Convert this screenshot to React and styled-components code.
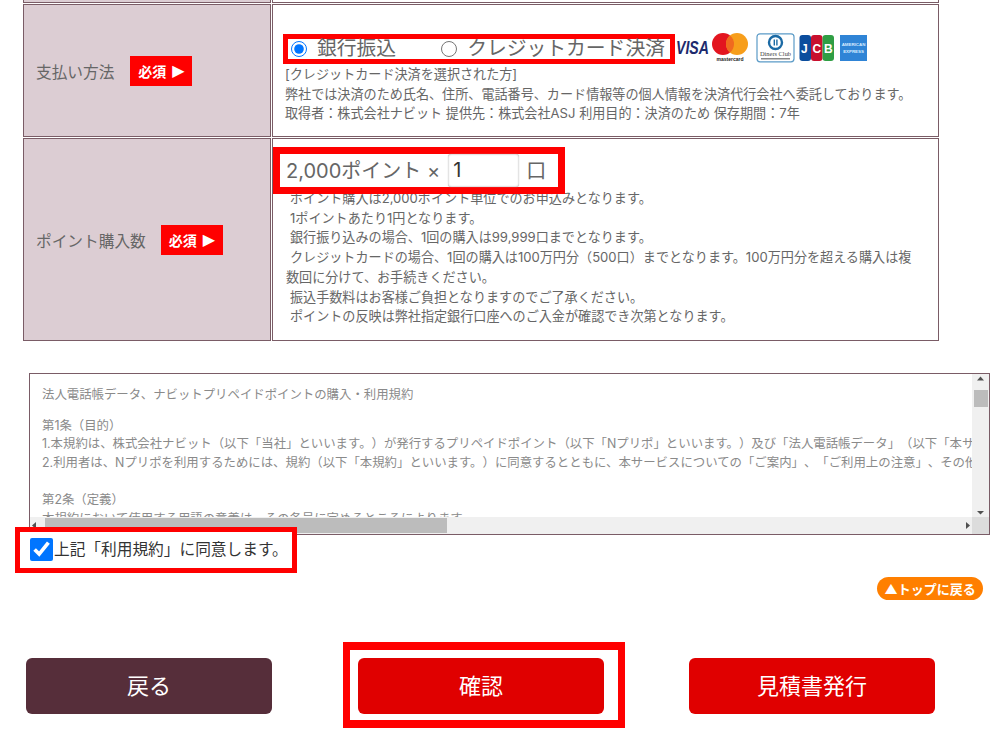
import React from "react";
import styled, { createGlobalStyle, css } from "styled-components";

const Global = createGlobalStyle`
  html, body { margin: 0; padding: 0; background: #fff; overflow: hidden; }
  body {
    font-family: Inter, "Noto Sans CJK JP", "Noto Sans", sans-serif;
    color: #666;
    text-spacing-trim: space-all;
    font-feature-settings: "calt" 0;
  }
  * { box-sizing: border-box; }
`;

const Page = styled.div`
  width: 1000px;
  height: 733px;
  overflow: hidden;
`;

const FormTable = styled.div`
  display: grid;
  grid-template-columns: 248px 667px;
  grid-template-rows: 3px 133px 203px;
  gap: 1px;
  margin-left: 23px;
`;

const SliverLabel = styled.div`
  background: #dccdd3;
  border-bottom: 1px solid #7a5c66;
  border-left: 1px solid #7a5c66;
  border-right: 1px solid #7a5c66;
`;

const SliverValue = styled.div`
  border-bottom: 1px solid #7a5c66;
  border-left: 1px solid #7a5c66;
  border-right: 1px solid #7a5c66;
`;

const LabelCell = styled.div`
  display: flex;
  align-items: center;
  gap: ${(p) => p.$gap}px;
  padding-left: 12px;
  background: #dccdd3;
  border: 1px solid #7a5c66;
  font-size: 15.7px;
  color: #666;
`;

const LabelText = styled.span`
  padding-top: 2px;
`;

const Required = styled.span`
  display: inline-flex;
  align-items: center;
  justify-content: center;
  gap: 6px;
  width: 62px;
  height: 30px;
  margin-left: 1px;
  background: #ff0000;
  color: #fff;
  font-size: 14px;
  font-weight: 700;
`;

const Triangle = styled.span`
  font-size: 16px;
  line-height: 1;
  font-family: "DejaVu Sans", sans-serif;
`;

const ValueCell = styled.div`
  border: 1px solid #7a5c66;
  background: #fff;
  padding: ${(p) => p.$pad};
`;

const PayLine = styled.div`
  display: flex;
  align-items: center;
`;

const Marker = styled.div`
  display: flex;
  align-items: center;
  background: #fff;
  border: 5px solid #ff0000;
`;

const RadioBox = styled(Marker)`
  width: 392px;
  height: 30px;
  font-size: 19.8px;
  color: #666;
  padding: 0 0 1px 3px;
`;

const Radio = styled.input.attrs({ type: "radio", name: "pay" })`
  width: 16px;
  height: 16px;
  margin: 0 10px 0 0;
  accent-color: #0075ff;
`;

const RadioLabel = styled.label`
  display: inline-flex;
  align-items: center;
  margin-right: ${(p) => p.$mr || 0}px;
  line-height: 21px;
  white-space: nowrap;
`;

const Cards = styled.div`
  display: flex;
  align-items: center;
  margin-left: 1px;
`;

const Note = styled.div`
  font-size: 13.1px;
  line-height: 19.7px;
  color: #666;
  white-space: nowrap;
  margin-left: ${(p) => p.$ml || 0}px;
  padding-left: ${(p) => (p.$indent ? 4 : 0)}px;
`;

const NoteBlock = styled.div`
  margin-top: ${(p) => p.$mt}px;
`;

const QtyBox = styled(Marker)`
  position: relative;
  z-index: 1;
  width: 292px;
  height: 47px;
  border-width: 7px;
  font-size: 20px;
  color: #666;
  padding-left: 6px;
`;

const QtyText = styled.span`
  white-space: nowrap;
  padding-bottom: 2px;
`;

const QtyInput = styled.input`
  width: 71px;
  height: 33px;
  margin: 0 7px 0 8px;
  padding: 0 5px 1px;
  border: none;
  border-radius: 3px;
  box-shadow: inset 0 0 2px #999, 0 0 1px #bbb;
  font: inherit;
  color: #333;
  outline: none;
`;

const QtyNotes = styled.div`
  margin: -5px 0 0 13px;
`;

const Terms = styled.div`
  display: grid;
  grid-template-columns: 1fr 17px;
  grid-template-rows: 1fr 17px;
  width: 961px;
  height: 162px;
  margin: 32px 0 0 29px;
  border: 1px solid #7a5c66;
`;

const TermsText = styled.div`
  overflow: hidden;
  padding: 12px 0 0 12px;
  font-size: 12.4px;
  line-height: 18.6px;
  color: #8a8a8a;
  white-space: nowrap;
`;

const TermsLine = styled.div`
  margin-bottom: ${(p) => p.$mb || 0}px;
`;

const ScrollBar = styled.div`
  display: flex;
  flex-direction: ${(p) => (p.$v ? "column" : "row")};
  align-items: center;
  background: #f0f0f0;
`;

const ScrollThumb = styled.div`
  background: #bcbcbc;
  ${(p) =>
    p.$v
      ? css`
          width: 14px;
          height: 17px;
          margin-top: 7px;
        `
      : css`
          width: 402px;
          height: 15px;
          margin-left: 6px;
        `}
`;

const ScrollArrow = styled.svg`
  flex: none;
  fill: #505050;
  ${(p) =>
    p.$end &&
    css`
      margin-${p.$end}: auto;
    `}
`;

const ScrollCorner = styled.div`
  background: #dcdcdc;
`;

const AgreeBox = styled(Marker)`
  position: relative;
  z-index: 1;
  width: 282px;
  height: 46px;
  margin: -8px 0 0 15px;
  padding: 0 0 2px 10px;
  font-size: 15.7px;
  color: #333;
`;

const Agree = styled.input.attrs({ type: "checkbox" })`
  width: 23px;
  height: 23px;
  margin: 0 1px 0 0;
  accent-color: #0075ff;
`;

const AgreeText = styled.span`
  padding-bottom: 2px;
  white-space: nowrap;
`;

const TopRow = styled.div`
  display: flex;
  justify-content: flex-end;
  padding-right: 17px;
  margin-top: 4px;
`;

const TopLink = styled.a`
  display: flex;
  align-items: center;
  justify-content: center;
  width: 106px;
  height: 23px;
  border-radius: 12px;
  background: #ff7f00;
  color: #fff;
  font-size: 13px;
  font-weight: 700;
  white-space: nowrap;
`;

const Actions = styled.div`
  display: flex;
  align-items: flex-start;
  margin-top: 42px;
  padding-left: 26px;
`;

const ActionButton = styled.button`
  width: 246px;
  height: 56px;
  margin-top: ${(p) => (p.$inFrame ? 0 : 16)}px;
  border: none;
  border-radius: 6px;
  background: ${(p) => (p.$back ? "#562e3a" : "#e00000")};
  color: #fff;
  font: inherit;
  font-size: 22px;
  padding: 0 0 4px;
`;

const ActionFrame = styled.div`
  width: 282px;
  height: 86px;
  margin: 0 64px 0 71px;
  padding: 8px 0 0 8px;
  border: 8px solid #ff0000;
  border-left-width: 7px;
  border-right-width: 7px;
`;

const VisaText = styled.text`
  font-family: "Liberation Sans", sans-serif;
  font-weight: 700;
  font-style: italic;
`;

const CardLogos = () => (
  <Cards>
    <svg width="192" height="32" viewBox="0 0 192 32" aria-hidden="true">
      <VisaText x="0" y="21" fontSize="18.5" fill="#1d2a6d" textLength="33" lengthAdjust="spacingAndGlyphs">VISA</VisaText>
      <circle cx="47" cy="11" r="11" fill="#e3151f" />
      <circle cx="61" cy="11" r="11" fill="#f79e1b" />
      <path d="M54 2.5a11 11 0 0 1 0 17a11 11 0 0 1 0-17z" fill="#f06a1f" />
      <text x="54" y="28" fontSize="5" fontFamily="Liberation Sans" fontWeight="700" textAnchor="middle" fill="#222">mastercard</text>
      <rect x="81" y="0.8" width="37" height="28" rx="3" fill="#fff" stroke="#5b9bc7" strokeWidth="1.2" />
      <circle cx="99.5" cy="9.5" r="6.5" fill="#fff" stroke="#1b6aa5" strokeWidth="2.4" />
      <rect x="97.6" y="6.5" width="1.4" height="6" fill="#1b6aa5" />
      <rect x="100.2" y="6.5" width="1.4" height="6" fill="#1b6aa5" />
      <text x="99.5" y="23" fontSize="6.4" fontFamily="Liberation Serif" textAnchor="middle" fill="#444">Diners Club</text>
      <rect x="85" y="25" width="29" height="1.5" fill="#888" />
      <rect x="123.5" y="2" width="11.5" height="26" rx="3" fill="#0b4d9d" />
      <rect x="135" y="2" width="11.5" height="26" rx="3" fill="#c8102e" />
      <rect x="146.5" y="2" width="11.5" height="26" rx="3" fill="#2f9e44" />
      <text x="125" y="20" fontSize="12" fontFamily="Liberation Sans" fontWeight="700" fill="#fff">J</text>
      <text x="136.5" y="20" fontSize="12" fontFamily="Liberation Sans" fontWeight="700" fill="#fff">C</text>
      <text x="148" y="20" fontSize="12" fontFamily="Liberation Sans" fontWeight="700" fill="#fff">B</text>
      <rect x="164" y="2" width="27" height="26" fill="#2f84d6" />
      <text x="177.5" y="13" fontSize="4.4" fontFamily="Liberation Sans" fontWeight="700" textAnchor="middle" fill="#d8ecff">AMERICAN</text>
      <text x="177.5" y="20" fontSize="4.4" fontFamily="Liberation Sans" fontWeight="700" textAnchor="middle" fill="#d8ecff">EXPRESS</text>
    </svg>
  </Cards>
);

const Arrow = ({ points, end }) => (
  <ScrollArrow width="9" height="9" viewBox="0 0 9 9" $end={end} aria-hidden="true">
    <polygon points={points} />
  </ScrollArrow>
);

export default function App() {
  return (
    <Page>
      <Global />
      <FormTable>
        <SliverLabel />
        <SliverValue />

        <LabelCell $gap={15}>
          <LabelText>支払い方法</LabelText>
          <Required>必須<Triangle>▶</Triangle></Required>
        </LabelCell>
        <ValueCell $pad="28px 0 0 10px">
          <PayLine>
            <RadioBox>
              <RadioLabel $mr={45}><Radio defaultChecked />銀行振込</RadioLabel>
              <RadioLabel><Radio />クレジットカード決済</RadioLabel>
            </RadioBox>
            <CardLogos />
          </PayLine>
          <NoteBlock $mt={0}>
            <Note $ml={2}>[クレジットカード決済を選択された方]</Note>
            <Note $ml={2}>弊社では決済のため氏名、住所、電話番号、カード情報等の個人情報を決済代行会社へ委託しております。</Note>
            <Note $ml={2}>取得者：株式会社ナビット 提供先：株式会社ASJ 利用目的：決済のため 保存期間：7年</Note>
          </NoteBlock>
        </ValueCell>

        <LabelCell $gap={14}>
          <LabelText>ポイント購入数</LabelText>
          <Required>必須<Triangle>▶</Triangle></Required>
        </LabelCell>
        <ValueCell $pad="8px 0 0 0">
          <QtyBox>
            <QtyText>2,000ポイント ×</QtyText>
            <QtyInput defaultValue="1" />
            <QtyText>口</QtyText>
          </QtyBox>
          <QtyNotes>
            <Note $indent>ポイント購入は2,000ポイント単位でのお申込みとなります。</Note>
            <Note $indent>1ポイントあたり1円となります。</Note>
            <Note $indent>銀行振り込みの場合、1回の購入は99,999口までとなります。</Note>
            <Note $indent>クレジットカードの場合、1回の購入は100万円分（500口）までとなります。100万円分を超える購入は複</Note>
            <Note>数回に分けて、お手続きください。</Note>
            <Note $indent>振込手数料はお客様ご負担となりますのでご了承ください。</Note>
            <Note $indent>ポイントの反映は弊社指定銀行口座へのご入金が確認でき次第となります。</Note>
          </QtyNotes>
        </ValueCell>
      </FormTable>

      <Terms>
        <TermsText>
          <TermsLine $mb={12}>法人電話帳データ、ナビットプリペイドポイントの購入・利用規約</TermsLine>
          <TermsLine>第1条（目的）</TermsLine>
          <TermsLine>1.本規約は、株式会社ナビット（以下「当社」といいます。）が発行するプリペイドポイント（以下「Nプリポ」といいます。）及び「法人電話帳データ」（以下「本サービス」といいます。）</TermsLine>
          <TermsLine $mb={18.6}>2.利用者は、Nプリポを利用するためには、規約（以下「本規約」といいます。）に同意するとともに、本サービスについての「ご案内」、「ご利用上の注意」、その他の規定</TermsLine>
          <TermsLine>第2条（定義）</TermsLine>
          <TermsLine>本規約において使用する用語の意義は、その各号に定めるところによります。</TermsLine>
        </TermsText>
        <ScrollBar $v>
          <Arrow points="4.5,2.5 8,6.5 1,6.5" />
          <ScrollThumb $v />
          <Arrow points="1,3 8,3 4.5,6.5" end="top" />
        </ScrollBar>
        <ScrollBar>
          <Arrow points="6,1 6,8 2,4.5" />
          <ScrollThumb />
          <Arrow points="3,1 3,8 7,4.5" end="left" />
        </ScrollBar>
        <ScrollCorner />
      </Terms>

      <AgreeBox>
        <Agree defaultChecked />
        <AgreeText>上記「利用規約」に同意します。</AgreeText>
      </AgreeBox>

      <TopRow>
        <TopLink>▲トップに戻る</TopLink>
      </TopRow>

      <Actions>
        <ActionButton $back>戻る</ActionButton>
        <ActionFrame>
          <ActionButton $inFrame>確認</ActionButton>
        </ActionFrame>
        <ActionButton>見積書発行</ActionButton>
      </Actions>
    </Page>
  );
}
